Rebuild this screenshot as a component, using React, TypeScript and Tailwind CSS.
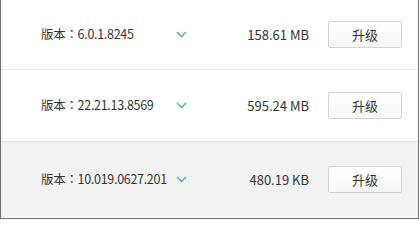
const rows = [
  { version: "6.0.1.8245", size: "158.61 MB", h: "h-[70px]", bg: "bg-white" },
  { version: "22.21.13.8569", size: "595.24 MB", h: "h-[72px]", bg: "bg-white" },
  { version: "10.019.0627.201", size: "480.19 KB", h: "h-[75px]", bg: "bg-[#f2f2f2]" },
];

function Chevron() {
  return (
    <svg width="11" height="7" viewBox="0 0 11 7" fill="none">
      <path d="M1 1l4.5 4.5L10 1" stroke="#3fb57c" strokeWidth="1.3" />
    </svg>
  );
}

export default function App() {
  return (
    <div
      className="w-[419px] h-[219px] bg-white border-l border-r border-b border-[#6e6e6e] text-[#333] text-[13px]"
      style={{ fontFamily: '"Noto Sans CJK TC", "Noto Sans", sans-serif' }}
    >
      {rows.map((r, i) => (
        <div
          key={r.version}
          className={`flex items-center ${r.h} ${r.bg} ${i < 2 ? "border-b border-[#e5e5e5]" : ""}`}
        >
          <div className="w-[174px] pl-[40px] shrink-0 whitespace-nowrap tracking-[-0.3px] text-[12.5px]">
            版本：{r.version}
          </div>
          <div className="w-[12px] flex justify-end shrink-0">
            <Chevron />
          </div>
          <div className="w-[122px] text-right shrink-0">{r.size}</div>
          <div className="pl-[19px]">
            <button className="w-[74px] h-[27px] border border-[#d3d3d3] rounded-[2px] bg-gradient-to-b from-white to-[#f7f7f7] text-[13px] text-[#333]">
              升级
            </button>
          </div>
        </div>
      ))}
    </div>
  );
}
